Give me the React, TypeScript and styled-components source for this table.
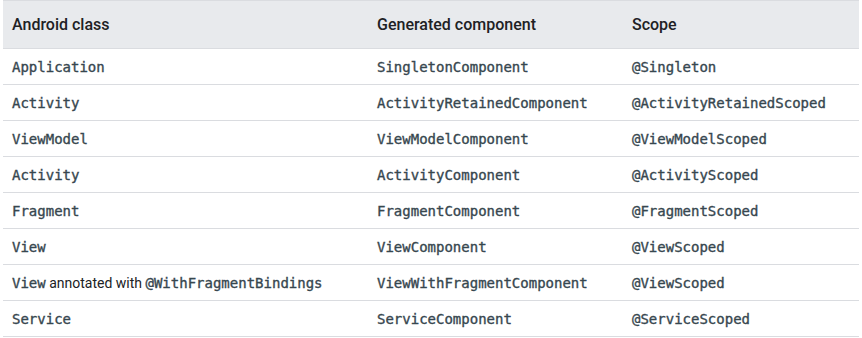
import styled, { createGlobalStyle } from 'styled-components'

const GlobalStyle = createGlobalStyle`
  body {
    margin: 0;
    padding: 0 0 0 3px;
    background: #ffffff;
    font-family: Roboto, "Noto Sans", sans-serif;
  }
`

const Table = styled.table`
  width: 856px;
  border-collapse: separate;
  border-spacing: 0;
  table-layout: fixed;
  color: #202124;
`

const HeadCell = styled.th<{ $width: number }>`
  width: ${p => p.$width}px;
  height: 49px;
  padding: 0 9px;
  box-sizing: border-box;
  background: #e8eaed;
  border-top: 1px solid #dadce0;
  border-bottom: 1px solid #dadce0;
  text-align: left;
  font-size: 16px;
  font-weight: 500;
  line-height: 20px;
  vertical-align: middle;
`

const Cell = styled.td`
  height: 36px;
  padding: 0 9px;
  box-sizing: border-box;
  border-bottom: 1px solid #dadce0;
  font-size: 14px;
  line-height: 20px;
  vertical-align: middle;
  white-space: nowrap;
`

const Code = styled.code`
  font-family: "DejaVu Sans Mono", "Liberation Mono", monospace;
  font-size: 14px;
  color: #37474f;
  -webkit-text-stroke: 0.35px #37474f;
`

const rows: [string, string, string][] = [
  ['Application', 'SingletonComponent', '@Singleton'],
  ['Activity', 'ActivityRetainedComponent', '@ActivityRetainedScoped'],
  ['ViewModel', 'ViewModelComponent', '@ViewModelScoped'],
  ['Activity', 'ActivityComponent', '@ActivityScoped'],
  ['Fragment', 'FragmentComponent', '@FragmentScoped'],
  ['View', 'ViewComponent', '@ViewScoped'],
  ['', 'ViewWithFragmentComponent', '@ViewScoped'],
  ['Service', 'ServiceComponent', '@ServiceScoped'],
]

export default function App() {
  return (
    <>
      <GlobalStyle />
      <Table>
        <thead>
          <tr>
            <HeadCell $width={365}>Android class</HeadCell>
            <HeadCell $width={255}>Generated component</HeadCell>
            <HeadCell $width={236}>Scope</HeadCell>
          </tr>
        </thead>
        <tbody>
          {rows.map(([cls, comp, scope], i) => (
            <tr key={i}>
              <Cell>
                {cls ? (
                  <Code>{cls}</Code>
                ) : (
                  <>
                    <Code>View</Code> annotated with <Code>@WithFragmentBindings</Code>
                  </>
                )}
              </Cell>
              <Cell>
                <Code>{comp}</Code>
              </Cell>
              <Cell>
                <Code>{scope}</Code>
              </Cell>
            </tr>
          ))}
        </tbody>
      </Table>
    </>
  )
}
